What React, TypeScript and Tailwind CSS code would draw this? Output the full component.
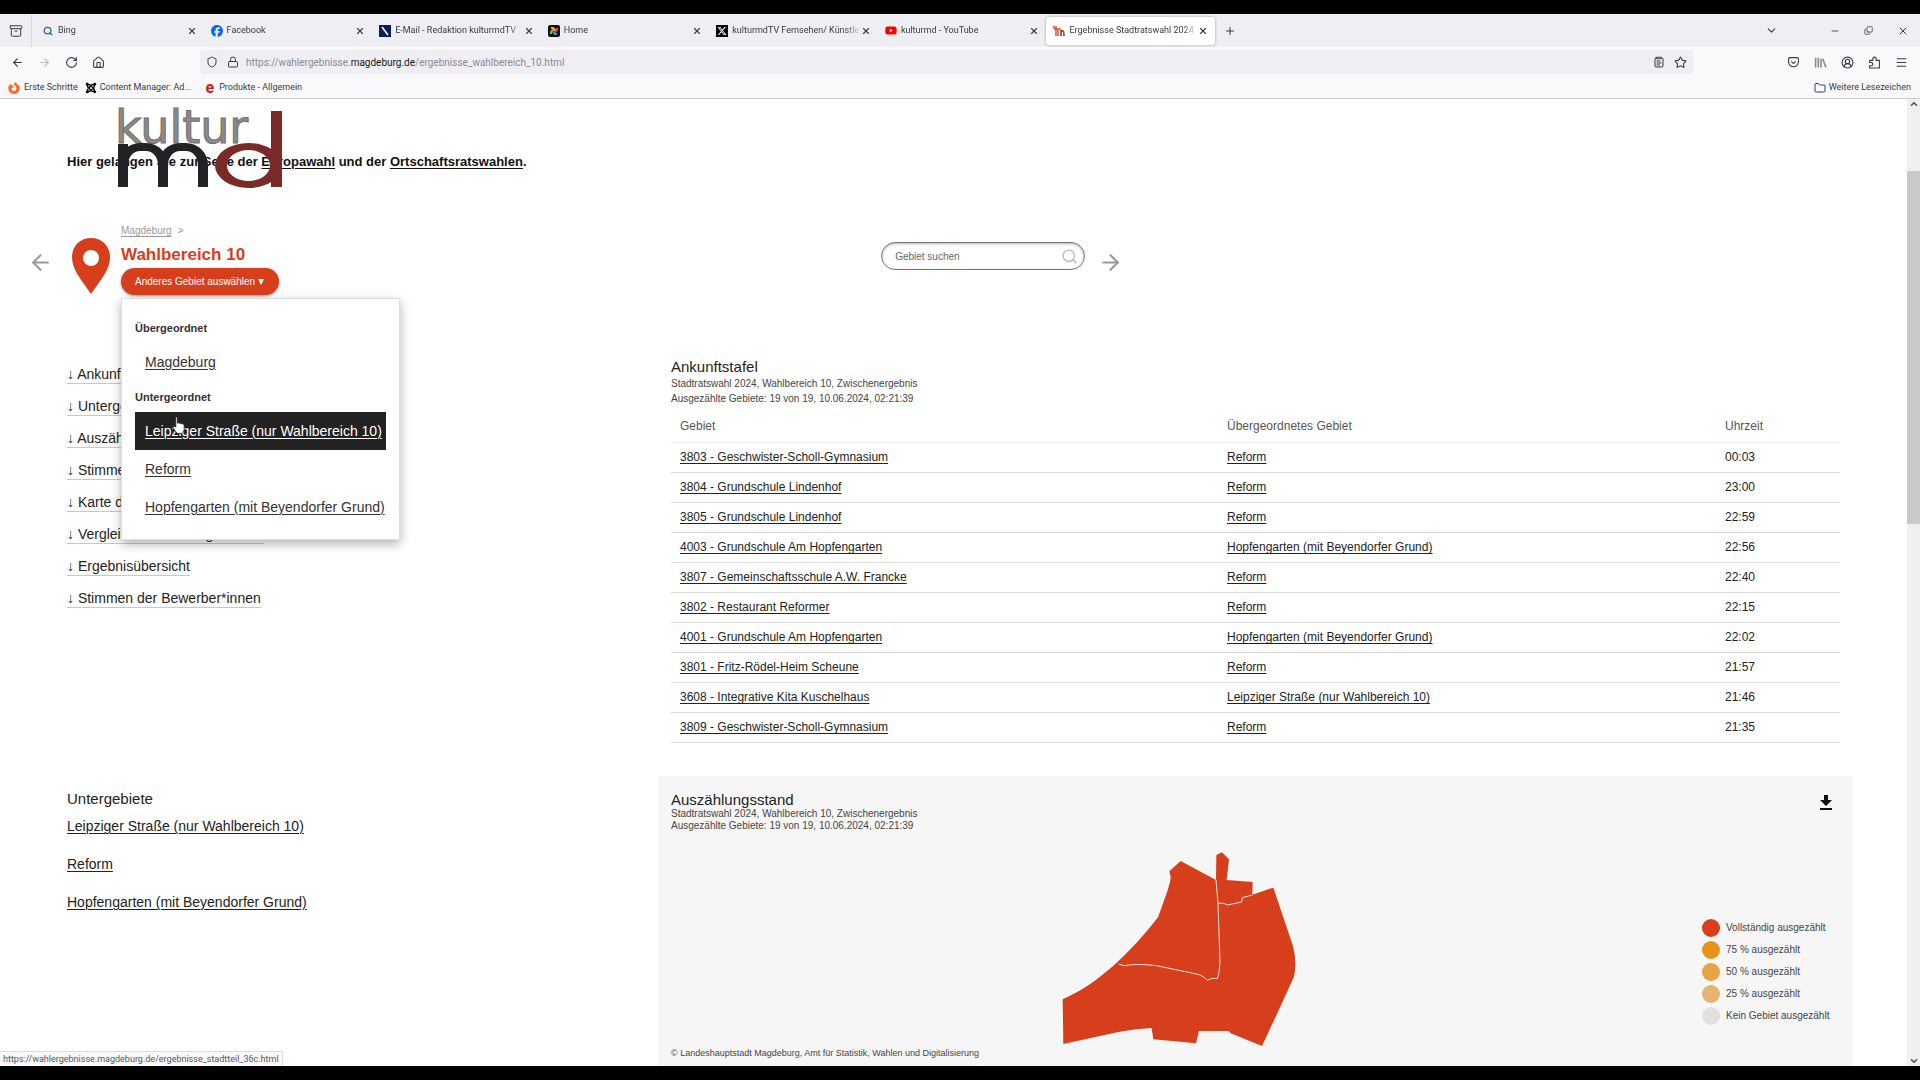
import React from "react";
import {
  Archive, ArrowLeft, ArrowRight, ChevronDown, ChevronUp, CircleUserRound, Folder, House, Lock,
  Menu, Minus, Plus, RotateCw, Search, Shield, Star, X, Copy, NotepadText,
} from "lucide-react";
import { FaFacebook, FaJoomla, FaXTwitter, FaYoutube, FaFirefoxBrowser } from "react-icons/fa6";

const HOPFEN = "Hopfengarten (mit Beyendorfer Grund)";
const LEIPZIG = "Leipziger Straße (nur Wahlbereich 10)";

const tabs = [
  { title: "Bing", icon: <Search className="size-[10px] text-[#2b62b8]" strokeWidth={3} /> },
  { title: "Facebook", icon: <FaFacebook className="size-3 text-[#0866ff]" /> },
  {
    title: "E-Mail - Redaktion kulturmdTV",
    icon: (
      <svg viewBox="0 0 12 12" className="size-3">
        <rect width="12" height="12" fill="#0b1f5c" />
        <path d="M3 2l6 8" stroke="#fff" strokeWidth="1.6" />
      </svg>
    ),
  },
  {
    title: "Home",
    icon: (
      <svg viewBox="0 0 12 12" className="size-3">
        <rect width="12" height="12" rx="2" fill="#111" />
        <path d="M3 9V7l3-3" stroke="#7ac143" strokeWidth="2" fill="none" />
        <path d="M3 3h2l3 3" stroke="#f9a541" strokeWidth="2" fill="none" />
        <path d="M9 3v2L6 8" stroke="#f44321" strokeWidth="2" fill="none" />
        <path d="M9 9H7L5 7" stroke="#5091cd" strokeWidth="2" fill="none" />
      </svg>
    ),
  },
  {
    title: "kulturmdTV Fernsehen/ Künstle",
    icon: (
      <span className="flex size-3 items-center justify-center bg-black">
        <FaXTwitter className="size-[10px] text-white" />
      </span>
    ),
  },
  { title: "kulturmd - YouTube", icon: <FaYoutube className="size-[13px] text-[#f00]" /> },
  {
    title: "Ergebnisse Stadtratswahl 2024",
    active: true,
    icon: (
      <svg viewBox="0 0 12 12" className="size-3" fill="none" strokeWidth="1.5">
        <path d="M1 1v3M3 1v10M1 4h4v7M5 4q3-1 3 2" stroke="#d8552b" />
        <path d="M8 11V7q0-2 2-1 1 0 1 5" stroke="#8b2f2a" />
      </svg>
    ),
  },
];

const rows = [
  ["3803 - Geschwister-Scholl-Gymnasium", "Reform", "00:03"],
  ["3804 - Grundschule Lindenhof", "Reform", "23:00"],
  ["3805 - Grundschule Lindenhof", "Reform", "22:59"],
  ["4003 - Grundschule Am Hopfengarten", HOPFEN, "22:56"],
  ["3807 - Gemeinschaftsschule A.W. Francke", "Reform", "22:40"],
  ["3802 - Restaurant Reformer", "Reform", "22:15"],
  ["4001 - Grundschule Am Hopfengarten", HOPFEN, "22:02"],
  ["3801 - Fritz-Rödel-Heim Scheune", "Reform", "21:57"],
  ["3608 - Integrative Kita Kuschelhaus", LEIPZIG, "21:46"],
  ["3809 - Geschwister-Scholl-Gymnasium", "Reform", "21:35"],
];

const anchors = [
  "Ankunftstafel",
  "Untergebiete",
  "Auszählungsstand",
  "Stimmenanteile",
  "Karte der Stimmenanteile",
  "Vergleich zur vorherigen Wahl",
  "Ergebnisübersicht",
  "Stimmen der Bewerber*innen",
];

const legend = [
  ["bg-[#d63e1c]", "Vollständig ausgezählt"],
  ["bg-[#e8921c]", "75 % ausgezählt"],
  ["bg-[#e8a347]", "50 % ausgezählt"],
  ["bg-[#e7b272]", "25 % ausgezählt"],
  ["bg-[#e0e0e0]", "Kein Gebiet ausgezählt"],
];

const link = "underline decoration-1 underline-offset-2";

function TabBar() {
  return (
    <div className="flex h-[33px] items-center bg-[#efeef3] text-[#3a3a44]">
      <button aria-label="Tab-Übersicht" className="flex h-full w-8 items-center justify-center border-r border-[#d8d8de]">
        <Archive className="size-[14px]" strokeWidth={1.7} />
      </button>
      <div role="tablist" className="ml-[3px] flex h-full w-[1180px] items-center">
        {tabs.map((t) => (
          <div
            key={t.title}
            role="tab"
            aria-selected={!!t.active}
            className={
              t.active
                ? "flex h-7 min-w-0 flex-1 items-center rounded-[3px] bg-white px-[7px] shadow-[0_0_3px_rgba(0,0,0,0.35)]"
                : "flex h-7 min-w-0 flex-1 items-center px-[7px]"
            }
          >
            <span className="mr-1 flex w-3 shrink-0 justify-center">{t.icon}</span>
            <span className="min-w-0 flex-1 overflow-hidden whitespace-nowrap [mask-image:linear-gradient(to_right,black_88%,transparent)]">
              {t.title}
            </span>
            <button aria-label="Tab schließen">
              <X className="size-[10px]" strokeWidth={2.6} />
            </button>
          </div>
        ))}
      </div>
      <button aria-label="Neuer Tab" className="ml-[9px]">
        <Plus className="size-3" strokeWidth={2} />
      </button>
      <div className="ml-auto flex items-center gap-6 pr-[11px]">
        <button aria-label="Alle Tabs" className="mr-7">
          <ChevronDown className="size-[13px]" />
        </button>
        <button aria-label="Minimieren"><Minus className="size-[10px]" /></button>
        <button aria-label="Verkleinern"><Copy className="size-[9px] -scale-x-100 rotate-180" /></button>
        <button aria-label="Schließen"><X className="size-3" /></button>
      </div>
    </div>
  );
}

function NavBar() {
  return (
    <div className="flex h-[30px] items-center bg-[#f9f9fb] text-[#3a3a44]">
      <div className="flex w-[200px] items-center gap-[14px] pl-[11px]">
        <button aria-label="Zurück"><ArrowLeft className="size-[13px]" /></button>
        <button aria-label="Vor"><ArrowRight className="size-[13px] text-[#b9b9c0]" /></button>
        <button aria-label="Neu laden"><RotateCw className="size-[13px]" /></button>
        <button aria-label="Startseite"><House className="size-[13px]" /></button>
      </div>
      <div className="flex h-6 w-[1493px] items-center rounded-[3px] bg-[#efeef3] px-[6px]">
        <Shield className="size-3" />
        <Lock className="ml-[9px] size-3" />
        <span className="ml-[7px] flex-1 text-[10px] text-[#8b8b93]">
          https://wahlergebnisse.<span className="text-[#15141a]">magdeburg.de</span>/ergebnisse_wahlbereich_10.html
        </span>
        <NotepadText className="size-3" />
        <Star className="ml-[9px] size-[13px]" />
      </div>
      <div className="ml-auto flex items-center gap-[14px] pr-3">
        <svg viewBox="0 0 24 24" className="size-[13px]" fill="none" stroke="currentColor" strokeWidth="2">
          <path d="M5 3h14a2 2 0 0 1 2 2v6a9 9 0 0 1-18 0V5a2 2 0 0 1 2-2z" />
          <path d="M8 10l4 4 4-4" />
        </svg>
        <svg viewBox="0 0 24 24" className="size-[13px] text-[#8b8b93]" fill="none" stroke="currentColor" strokeWidth="3">
          <path d="M3 3v18M8 3v18M13 5v16M16 5l6 16" />
        </svg>
        <CircleUserRound className="size-[13px]" />
        <svg viewBox="0 0 24 24" className="size-[13px]" fill="none" stroke="currentColor" strokeWidth="2">
          <path d="M3 8h6V5a3 3 0 0 1 6 0v3h6v14H3v-4h3a3 3 0 0 0 0-6H3z" />
        </svg>
        <Menu className="size-[13px]" />
      </div>
    </div>
  );
}

function Bookmarks() {
  return (
    <div className="flex h-[22px] items-center border-b border-[#cbcbd0] bg-[#f9f9fb] pt-[1px] pr-[9px] pl-2 text-[#3a3a44]">
      <a href="#" className="flex items-center gap-1"><FaFirefoxBrowser className="size-3 text-[#ff6a1f]" />Erste Schritte</a>
      <a href="#" className="ml-[7px] flex items-center gap-[3px]"><FaJoomla className="size-3 text-black" />Content Manager: Ad...</a>
      <a href="#" className="ml-[14px] flex items-center gap-[5px]">
        <span className="text-[16px] leading-3 font-bold text-[#d0211c]">e</span>Produkte - Allgemein
      </a>
      <button className="ml-auto flex items-center gap-[3px]"><Folder className="size-3" />Weitere Lesezeichen</button>
    </div>
  );
}

function KulturLogo() {
  return (
    <div className="absolute top-3 left-[118px] h-[77px] w-[164px]" role="img" aria-label="kulturmd">
      <span className="absolute top-0 -left-[3px] font-['DejaVu_Sans'] text-[46px] leading-[33px] text-[#8a8a8a] [-webkit-text-stroke:1px_#6f6f6f]">
        kultur
      </span>
      <span className="absolute bottom-[1px] left-0 h-[43px] w-[10px] bg-[#222226]" />
      <span className="absolute bottom-[1px] left-0 h-11 w-[50px] rounded-t-[22px] border-x-[10px] border-t-[8px] border-[#222226]" />
      <span className="absolute bottom-[1px] left-10 h-11 w-[50px] rounded-t-[22px] border-x-[10px] border-t-[8px] border-[#222226]" />
      <span className="absolute right-0 bottom-0 h-[45px] w-[67px] rounded-[50%] border-x-[12px] border-y-[7px] border-[#7a2b29]" />
      <span className="absolute right-0 bottom-[1px] h-[76px] w-[11px] bg-[#7a2b29]" />
    </div>
  );
}

function AreaMenu() {
  const head = "px-[13px] text-[11px] font-bold leading-[14px] text-[#333]";
  const item = "mx-[13px] flex h-[38px] items-center px-[10px] text-[14px] whitespace-nowrap";
  return (
    <div className="absolute top-full left-0 z-10 mt-[3px] w-[279px] border border-[#ddd] bg-white pt-[22px] pb-[13px] shadow-[0_4px_10px_rgba(0,0,0,0.3)]">
      <h3 className={head}>Übergeordnet</h3>
      <div className={item + " mt-2 text-[#333]"}><a href="#" className={link}>Magdeburg</a></div>
      <h3 className={head + " mt-[9px]"}>Untergeordnet</h3>
      <div className={item + " relative mt-2 bg-[#222] text-white"}>
        <a href="#" className={link}>{LEIPZIG}</a>
        <svg viewBox="0 0 24 32" className="absolute top-1 left-9 h-[18px] w-[14px]">
          <path
            d="M8 2q2-1 3 1v10q2-2 4 0 2-1 4 1 3-1 4 2v8q-1 6-4 7h-8q-4-3-8-11 0-3 4-1l1 1V3z"
            fill="#fff" stroke="#222" strokeWidth="1.5"
          />
        </svg>
      </div>
      <div className={item + " text-[#333]"}><a href="#" className={link}>Reform</a></div>
      <div className={item + " text-[#333]"}><a href="#" className={link}>{HOPFEN}</a></div>
    </div>
  );
}

function LocationHeader() {
  return (
    <div className="mt-[49px] flex w-[59%] items-end pr-[2px] pl-7">
      <a href="#" aria-label="Vorheriges Gebiet" className="mb-5"><ArrowLeft className="size-[25px] text-[#999]" strokeWidth={2} /></a>
      <svg viewBox="0 0 38 56" className="mb-[1px] ml-[19px] h-14 w-[38px]">
        <path
          fillRule="evenodd" fill="#d63e1c"
          d="M19 0C8 0 0 8 0 19c0 13 9 22 19 37 10-15 19-24 19-37C38 8 30 0 19 0zm0 12a8 8 0 1 1 0 16 8 8 0 0 1 0-16z"
        />
      </svg>
      <div className="relative ml-[11px]">
        <p className="text-[10px] leading-5 text-[#999]">
          <a href="#" className={link}>Magdeburg</a><span className="ml-[6px]">&gt;</span>
        </p>
        <h1 className="text-[17px] leading-[27px] font-bold text-[#d63e1c]">Wahlbereich 10</h1>
        <button className="flex h-[27px] w-[158px] items-center gap-[3px] rounded-full bg-[#d63e1c] pl-[14px] text-[10px] text-white shadow-[0_1px_3px_rgba(0,0,0,0.4)]">
          Anderes Gebiet auswählen
          <svg viewBox="0 0 6 6" className="size-[6px]" fill="currentColor"><path d="M0 0h6L3 6z" /></svg>
        </button>
        <AreaMenu />
      </div>
      <label className="mb-[25px] ml-auto flex h-7 w-[204px] items-center rounded-full border border-[#777] bg-white pr-[6px] pl-[13px] shadow-[inset_0_1px_3px_rgba(0,0,0,0.3)]">
        <input aria-label="Gebiet suchen" placeholder="Gebiet suchen" className="min-w-0 flex-1 text-[10px] outline-none placeholder:text-[#666]" />
        <Search className="size-[17px] text-[#bbb]" strokeWidth={2} />
      </label>
      <a href="#" aria-label="Nächstes Gebiet" className="mb-5 ml-[13px]"><ArrowRight className="size-[25px] text-[#999]" strokeWidth={2} /></a>
    </div>
  );
}

function ArrivalTable() {
  return (
    <section className="px-[13px]">
      <h2 className="text-[15px] leading-[18px]">Ankunftstafel</h2>
      <p className="text-[10px] leading-[15px] text-[#444]">Stadtratswahl 2024, Wahlbereich 10, Zwischenergebnis</p>
      <p className="text-[10px] leading-[15px] text-[#444]">Ausgezählte Gebiete: 19 von 19, 10.06.2024, 02:21:39</p>
      <table className="w-full table-fixed border-collapse text-left text-[12px]">
        <colgroup><col className="w-[547px]" /><col /><col className="w-[124px]" /></colgroup>
        <thead>
          <tr className="h-9 border-b border-[#efefef] text-[#555]">
            <th className="px-[9px] pt-1 font-normal">Gebiet</th>
            <th className="px-[9px] pt-1 font-normal">Übergeordnetes Gebiet</th>
            <th className="px-[9px] pt-1 font-normal">Uhrzeit</th>
          </tr>
        </thead>
        <tbody>
          {rows.map(([a, b, c]) => (
            <tr key={a} className="h-[30px] border-b border-[#dcdcdc]">
              <td className="px-[9px]"><a href="#" className={link}>{a}</a></td>
              <td className="px-[9px]"><a href="#" className={link}>{b}</a></td>
              <td className="px-[9px]">{c}</td>
            </tr>
          ))}
        </tbody>
      </table>
    </section>
  );
}

function DistrictMap() {
  return (
    <svg viewBox="120 60 720 591" className="h-[197px] w-60" fill="#d63e1c">
      <path d="M448 124L482 93L588 150L589 75L606 67L627 88L620 150L698 156L697 194L760 173L818 345Q832 395 822 440L774 545L726 648L632 610L626 603L537 603L528 640L400 628L395 594Q340 597 295 606L130 642L128 508C230 465 330 370 414 262L440 190Q453 150 452 140z" />
      <g fill="none" stroke="#f5e0da" strokeWidth="3">
        <path d="M588 150L594 220L600 400Q598 430 592 446L575 445L562 451Q550 438 538 434L410 407Q350 400 312 407L296 402" />
        <path d="M594 220L612 220L622 225L665 216L667 203L697 195" />
      </g>
    </svg>
  );
}

function CountingPanel() {
  return (
    <section className="flex flex-col bg-[#f6f6f6] px-[13px] pt-[15px]">
      <div className="flex justify-between">
        <div className="text-[10px] leading-3 text-[#444]">
          <h2 className="text-[15px] leading-[17px] text-[#222]">Auszählungsstand</h2>
          <p>Stadtratswahl 2024, Wahlbereich 10, Zwischenergebnis</p>
          <p>Ausgezählte Gebiete: 19 von 19, 10.06.2024, 02:21:39</p>
        </div>
        <button aria-label="Herunterladen" className="mr-1 self-start">
          <svg viewBox="0 0 12 15" className="mt-1 mr-1 h-[15px] w-3" fill="#111">
            <path d="M4 0h4v5h4l-6 6-6-6h4zM0 13h12v2H0z" />
          </svg>
        </button>
      </div>
      <div className="mt-[18px] flex">
        <div className="flex flex-1 justify-center pr-[14px]"><DistrictMap /></div>
        <ul className="flex w-[138px] flex-col gap-1 pt-[69px] text-[10px] leading-[17px] text-[#444]">
          {legend.map(([c, t]) => (
            <li key={t} className="flex h-[18px] gap-[6px] whitespace-nowrap">
              <span className={"size-[18px] shrink-0 rounded-full " + c} />
              {t}
            </li>
          ))}
        </ul>
      </div>
      <p className="mt-auto pb-2 text-[9px] leading-[10px] text-[#444]">
        © Landeshauptstadt Magdeburg, Amt für Statistik, Wahlen und Digitalisierung
      </p>
    </section>
  );
}

export default function App() {
  return (
    <div className="flex min-h-screen flex-col bg-black py-[14px] font-['Liberation_Sans',sans-serif] text-[13px] text-[#222]">
      <header className="font-['Roboto',sans-serif] text-[9px]">
        <TabBar />
        <NavBar />
        <Bookmarks />
      </header>
      <div className="relative flex flex-1 bg-white">
        <main className="relative flex flex-1 flex-col pt-[53px]">
          <p className="pl-[67px] leading-5 font-bold text-[#111]">
            Hier gelangen Sie zur Seite der <a href="#" className={link}>Europawahl</a> und der{" "}
            <a href="#" className={link}>Ortschaftsratswahlen</a>.
          </p>
          <KulturLogo />
          <LocationHeader />
          <div className="mt-[63px] grid grid-cols-[658fr_1195fr] pr-[54px]">
            <nav className="pt-[1px] pl-[67px] text-[14px]">
              <ul>
                {anchors.map((a) => (
                  <li key={a} className="flex h-8 items-center">
                    <a href="#" className="border-b border-[#c8c8c8] leading-[17px]">↓ {a}</a>
                  </li>
                ))}
              </ul>
            </nav>
            <ArrivalTable />
          </div>
          <div className="mt-[33px] grid flex-1 grid-cols-[658fr_1195fr] pr-[54px]">
            <section className="pt-[14px] pl-[67px]">
              <h2 className="text-[15px] leading-[18px]">Untergebiete</h2>
              <ul className="text-[14px]">
                {[LEIPZIG, "Reform", HOPFEN].map((t) => (
                  <li key={t} className="flex h-[38px] items-center"><a href="#" className={link}>{t}</a></li>
                ))}
              </ul>
            </section>
            <CountingPanel />
          </div>
          <div className="absolute bottom-0 left-0 border-t border-r border-[#ddd] bg-[#f9f9fb] px-[3px] font-['Roboto',sans-serif] text-[9px] leading-[14px] text-[#555]">
            https://wahlergebnisse.magdeburg.de/ergebnisse_stadtteil_36c.html
          </div>
        </main>
        <div className="flex w-[13px] flex-col items-center bg-[#f0f0f0] text-[#555]">
          <ChevronUp className="size-[10px]" strokeWidth={4} />
          <div className="mt-[62px] h-[353px] w-full bg-[#c9c9c9]" />
          <ChevronDown className="mt-auto size-[10px]" strokeWidth={4} />
        </div>
      </div>
    </div>
  );
}
